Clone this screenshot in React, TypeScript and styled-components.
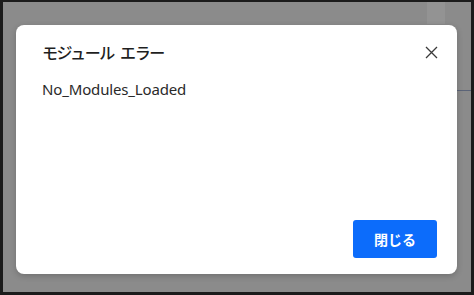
import React from 'react';
import styled, { createGlobalStyle } from 'styled-components';

const GlobalStyle = createGlobalStyle`
  html, body {
    margin: 0;
    padding: 0;
    background: #1b1b1b;
  }
  * {
    box-sizing: border-box;
  }
`;

const Frame = styled.div`
  width: 474px;
  height: 295px;
  border-style: solid;
  border-color: #1b1b1b;
  border-width: 2px 3px 3px 3px;
  background: #8b8b8b;
  position: relative;
  overflow: hidden;
  padding: 23px 14px 18px 13px;
  display: flex;
  font-family: 'Noto Sans', 'Noto Sans CJK JP', sans-serif;
`;

const BackdropStripe = styled.div`
  position: absolute;
  top: 0;
  right: 26px;
  width: 18px;
  height: 22px;
  background: #939393;
`;

const BackdropLine = styled.div`
  position: absolute;
  top: 88px;
  right: 0;
  width: 20px;
  height: 1px;
  background: #5b6478;
`;

const Dialog = styled.div`
  position: relative;
  flex: 1;
  background: #ffffff;
  border-radius: 8px;
  display: flex;
  flex-direction: column;
  padding: 14px 18px 16px 26px;
  box-shadow: 0 2px 6px rgba(0, 0, 0, 0.2);
`;

const Header = styled.div`
  display: flex;
  align-items: center;
  justify-content: space-between;
  height: 26px;
`;

const Title = styled.h2`
  margin: 0;
  font-size: 16px;
  font-weight: 500;
  color: #1f1f1f;
  font-family: 'Noto Sans CJK JP', sans-serif;
  letter-spacing: -1.4px;
  word-spacing: 4px;
`;

const CloseButton = styled.button`
  border: none;
  background: none;
  padding: 0;
  width: 16px;
  height: 16px;
  display: flex;
  align-items: center;
  justify-content: center;
  color: #3a3a3a;
  cursor: pointer;
`;

const Message = styled.p`
  margin: 14px 0 0;
  font-size: 15px;
  color: #2a2a2a;
  font-family: 'Noto Sans', sans-serif;
  letter-spacing: -0.15px;
`;

const Footer = styled.div`
  margin-top: auto;
  display: flex;
  justify-content: flex-end;
  padding-right: 2px;
`;

const PrimaryButton = styled.button`
  width: 84px;
  height: 38px;
  border: none;
  border-radius: 3px;
  background: #0c6cfb;
  color: #ffffff;
  font-family: 'Noto Sans CJK JP', sans-serif;
  font-weight: 700;
  font-size: 14px;
  cursor: pointer;
`;

export default function App() {
  return (
    <>
      <GlobalStyle />
      <Frame>
        <BackdropStripe />
        <BackdropLine />
        <Dialog>
          <Header>
            <Title>モジュール エラー</Title>
            <CloseButton aria-label="閉じる">
              <svg width="13" height="13" viewBox="0 0 13 13">
                <path d="M1 1 L12 12 M12 1 L1 12" stroke="currentColor" strokeWidth="1.3" fill="none" />
              </svg>
            </CloseButton>
          </Header>
          <Message>No_Modules_Loaded</Message>
          <Footer>
            <PrimaryButton>閉じる</PrimaryButton>
          </Footer>
        </Dialog>
      </Frame>
    </>
  );
}
